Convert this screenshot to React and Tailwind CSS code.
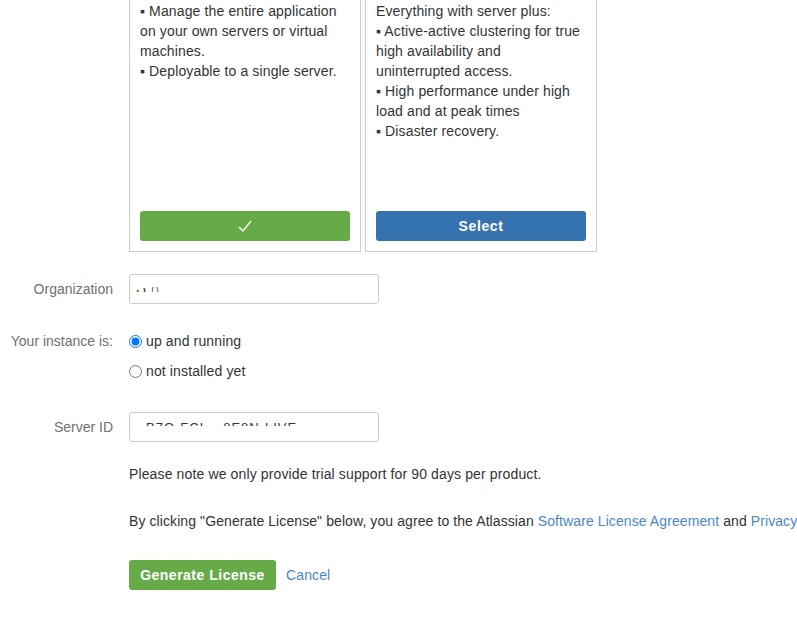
import React from "react";

const Card = ({ children, button }) => (
  <div className="w-[232px] h-[252px] border border-t-0 border-[#cccccc] px-[10px] pb-[10px] pt-px flex flex-col">
    <div className="text-[14px] leading-[20px] text-[#333333] tracking-[0.13px]">{children}</div>
    <div className="mt-auto">{button}</div>
  </div>
);

const Row = ({ label, children, center, className = "" }) => (
  <div className={`flex ${center ? "items-center" : "items-start"} ${className}`}>
    <div className="w-[113px] shrink-0 text-right text-[14px] leading-[20px] text-[#707070]">{label}</div>
    <div className="ml-[16px]">{children}</div>
  </div>
);

export default function App() {
  return (
    <div
      className="w-[797px] h-[627px] overflow-hidden bg-white text-[#333333]"
      style={{ fontFamily: '"Liberation Sans", Arial, sans-serif' }}
    >
      {/* product cards */}
      <div className="flex gap-[4px] ml-[129px]">
        <Card
          button={
            <button className="w-[210px] h-[30px] rounded-[3px] bg-[#67ab49] flex items-center justify-center">
              <svg width="14" height="12" viewBox="0 0 14 12" fill="none" stroke="white" strokeWidth="1.3">
                <path d="M1 7 L5 11 L13 1" />
              </svg>
            </button>
          }
        >
          <p>▪ Manage the entire application on your own servers or virtual machines.</p>
          <p>▪ Deployable to a single server.</p>
        </Card>
        <Card
          button={
            <button className="w-[210px] h-[30px] rounded-[3px] bg-[#3572b0] text-white font-bold text-[14px] tracking-[0.6px]">
              Select
            </button>
          }
        >
          <p>Everything with server plus:</p>
          <p>▪ Active-active clustering for true high availability and uninterrupted access.</p>
          <p>▪ High performance under high load and at peak times</p>
          <p>▪ Disaster recovery.</p>
        </Card>
      </div>

      <Row label="Organization" center className="mt-[22px]">
        <div className="w-[250px] h-[30px] border border-[#cccccc] rounded-[3px] px-[6px] flex items-center">
          <div className="h-[5px] overflow-hidden mt-px">
            <div className="text-[14px] leading-[20px] text-[#333] -mt-[9px] tracking-[3px]">ں ∩</div>
          </div>
        </div>
      </Row>

      <Row label="Your instance is:" className="mt-[27px]">
        <div className="flex flex-col gap-[10px] text-[14px] leading-[20px] text-[#333333] tracking-[0.13px]">
          <label className="flex items-center gap-[4px]">
            <input type="radio" name="inst" defaultChecked className="m-0 w-[13px] h-[13px]" />
            up and running
          </label>
          <label className="flex items-center gap-[4px]">
            <input type="radio" name="inst" className="m-0 w-[13px] h-[13px]" />
            not installed yet
          </label>
        </div>
      </Row>

      <Row label="Server ID" center className="mt-[31px]">
        <div className="w-[250px] h-[30px] border border-[#cccccc] rounded-[3px] pl-[16px] flex items-center">
          <div className="h-[3px] overflow-hidden -mt-[6px]">
            <div className="text-[13px] leading-[20px] text-[#333] -mt-[5px] tracking-[1px] whitespace-nowrap">
              B7Q-FCL·· 8E8N-LIVE
            </div>
          </div>
        </div>
      </Row>

      <div className="ml-[129px] text-[14px] leading-[20px] text-[#333333] whitespace-nowrap">
        <p className="mt-[22px] tracking-[0.13px]">Please note we only provide trial support for 90 days per product.</p>
        <p className="mt-[27px] tracking-[0.09px]">
          By clicking "Generate License" below, you agree to the Atlassian{" "}
          <a className="text-[#4a87c8]">Software License Agreement</a> and{" "}
          <a className="text-[#4a87c8]">Privacy Policy</a>.
        </p>
        <div className="mt-[29px] flex items-center gap-[10px]">
          <button className="h-[30px] w-[147px] rounded-[3px] bg-[#67ab49] text-white font-bold text-[14px] tracking-[0.5px]">
            Generate License
          </button>
          <a className="text-[#4a87c8] tracking-[0.13px]">Cancel</a>
        </div>
      </div>
    </div>
  );
}
